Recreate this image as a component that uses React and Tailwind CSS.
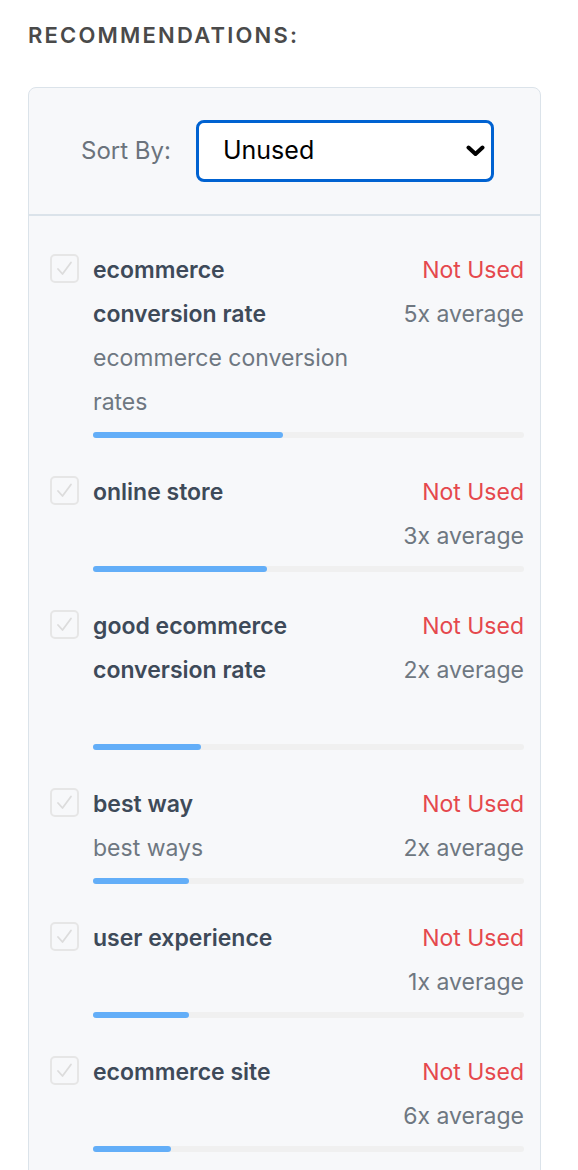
import React from 'react';

const items = [
  { keyword: 'ecommerce conversion rate', sub: 'ecommerce conversion rates', count: '5x average', pct: 44 },
  { keyword: 'online store', sub: '', count: '3x average', pct: 40.3 },
  { keyword: 'good ecommerce conversion rate', sub: '\u00a0', count: '2x average', pct: 25 },
  { keyword: 'best way', sub: 'best ways', count: '2x average', pct: 22.2 },
  { keyword: 'user experience', sub: '', count: '1x average', pct: 22.2 },
  { keyword: 'ecommerce site', sub: '', count: '6x average', pct: 18 },
];

function CheckBox() {
  return (
    <div className="mt-[6px] flex h-[29px] w-[29px] shrink-0 items-center justify-center rounded-[5px] border-2 border-[#e6e6e6]">
      <svg width="17" height="15" viewBox="0 0 17 15" fill="none">
        <path d="M2 8 L6.5 13 L15 1.5" stroke="#dcdcdc" strokeWidth="1.8" strokeLinecap="round" strokeLinejoin="round" />
      </svg>
    </div>
  );
}

function Item({ item }) {
  return (
    <div className="flex gap-[14px] pb-8">
      <CheckBox />
      <div className="flex-1">
        <div className="flex justify-between gap-4 text-[23px] leading-[44px]">
          <div className="w-[257px]">
            <p className="font-semibold text-[#3e4a59]">{item.keyword}</p>
            {item.sub && <p className="text-[#6e7781]">{item.sub}</p>}
          </div>
          <div className="text-right">
            <p className="text-[#e5484d]">Not Used</p>
            <p className="text-[#6e7781]">{item.count}</p>
          </div>
        </div>
        <div className="mt-2 h-[6px] w-full rounded-full bg-[#f0f0f0]">
          <div className="h-[6px] rounded-full bg-[#63aef8]" style={{ width: `${item.pct}%` }} />
        </div>
      </div>
    </div>
  );
}

export default function App() {
  return (
    <div className="min-h-screen bg-white px-[28px] pt-[22px] font-['Inter',sans-serif]">
      <h2 className="text-[22px] font-semibold leading-[27px] tracking-[2.2px] text-[#4a4a4a]">RECOMMENDATIONS:</h2>

      <div className="mt-[38px] w-[513px] rounded-t-[8px] border border-[#dbe3ea] bg-[#f7f8fa]">
        {/* Sort */}
        <div className="flex items-center justify-center gap-[25px] border-b-2 border-[#dbe3ea] py-[32px] pl-[6px]">
          <span className="text-[24px] text-[#6b737c]">Sort By:</span>
          <div className="relative">
            <select
              defaultValue="unused"
              className="h-[62px] w-[298px] appearance-none rounded-[8px] border-[3px] border-[#0062d1] bg-white pl-[24px] text-[25px] text-black outline-none"
            >
              <option value="unused">Unused</option>
              <option value="used">Used</option>
            </select>
            <svg className="pointer-events-none absolute right-[9px] top-[25px]" width="19" height="12" viewBox="0 0 19 12" fill="none">
              <path d="M2.5 2.5 L9.5 9 L16.5 2.5" stroke="#000" strokeWidth="4" strokeLinecap="round" strokeLinejoin="round" />
            </svg>
          </div>
        </div>

        {/* List */}
        <div className="pl-[21px] pr-[16px] pt-[32px]">
          {items.map((item) => (
            <Item key={item.keyword} item={item} />
          ))}
        </div>
      </div>
    </div>
  );
}
